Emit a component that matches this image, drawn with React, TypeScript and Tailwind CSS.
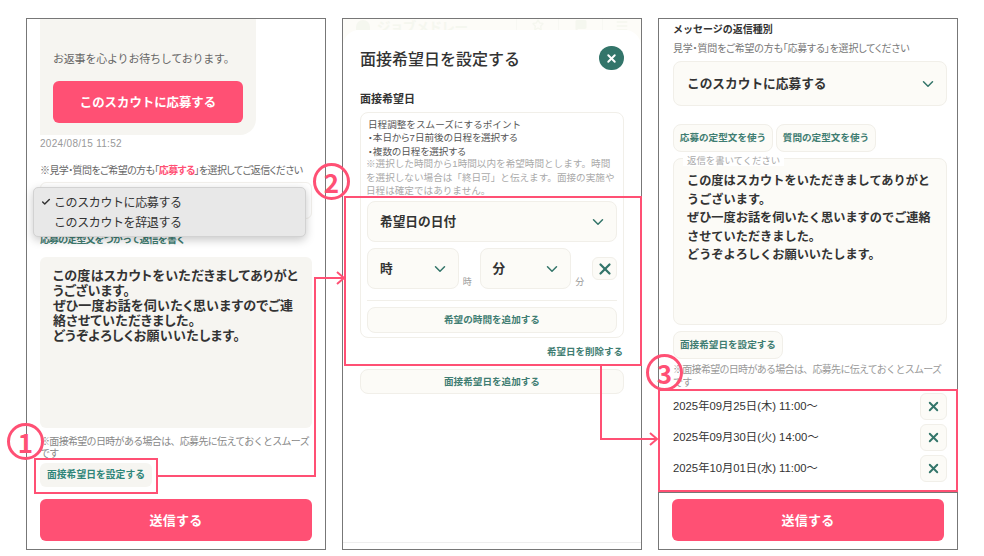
import { Check, ChevronDown, Menu, MessageSquare, Star, X } from 'lucide-react';

const fonts = "font-['Noto_Sans_CJK_JP','Noto_Sans',sans-serif]";
const latin = "font-['Liberation_Sans','Noto_Sans_CJK_JP',sans-serif]";
const palt = "[font-feature-settings:'palt']";

function SelectBox({ label, className }: { label: string; className: string }) {
  return (
    <div className={`flex items-center justify-between rounded-lg border border-[#f1efe9] bg-[#fcfbf7] pr-[9px] pl-3 text-[12.7px] leading-none font-bold text-[#333] ${className}`}>
      <span>{label}</span>
      <ChevronDown className="h-[18px] w-[18px] text-[#33756a]" strokeWidth={2} />
    </div>
  );
}

function GhostButton({ label, className }: { label: string; className: string }) {
  return (
    <div className={`flex items-center justify-center rounded-lg border border-[#f1efe9] bg-[#fcfbf7] text-[9.6px] leading-none font-bold text-[#3f7d72] ${className}`}>
      {label}
    </div>
  );
}

function RemoveButton({ className, size }: { className: string; size: number }) {
  return (
    <div className={`flex items-center justify-center rounded-md border border-[#f1efe9] bg-[#fcfbf7] text-[#33756a] ${className}`}>
      <X size={size} strokeWidth={3} />
    </div>
  );
}

function SendBar() {
  return (
    <div className="flex h-[42px] w-[272px] items-center justify-center rounded-md bg-[#ff5074] text-[13px] font-bold tracking-[0.2px] text-white">
      送信する
    </div>
  );
}

function ScreenOne() {
  return (
    <div className="relative flex h-[532px] w-[300px] flex-col border border-[#777] bg-white pl-[13px]">
      <div className="flex h-[116px] w-[216px] flex-col justify-end rounded-br-2xl bg-[#f6f5f1] px-[13px] pb-3">
        <p className="text-[11px] leading-4 tracking-[-0.2px] text-[#666]">お返事を心よりお待ちしております。</p>
        <div className="mt-[15px] flex h-[42px] w-[190px] items-center justify-center rounded-md bg-[#ff5074] text-[12.4px] font-bold text-white">
          このスカウトに応募する
        </div>
      </div>
      <p className={`mt-[3px] text-[10px] leading-3 tracking-[0.3px] text-[#999] ${latin}`}>2024/08/15 11:52</p>
      <p className={`mt-[14px] text-[10px] leading-3 tracking-[-0.6px] whitespace-nowrap text-[#666] ${palt}`}>
        ※見学・質問をご希望の方も「<span className="font-bold text-[#ff5074]">応募する</span>」を選択してご返信ください
      </p>
      <div className="mt-[6px] h-[37px] w-[272px] rounded-md border border-[#f2f0ec] bg-white" />
      <p className="mt-[14px] text-[10px] leading-3 font-bold tracking-[-0.9px] text-[#3f7d72]">応募の定型文をつかって返信を書く</p>
      <div className={`mt-3 h-[171px] w-[272px] rounded-md bg-[#f6f5f1] pt-[10px] pl-[13px] text-[13px] leading-[15px] font-bold tracking-[0.3px] whitespace-nowrap text-[#333] ${palt}`}>
        この度はスカウトをいただきましてありがと<br />
        うございます。<br />
        ぜひ一度お話を伺いたく思いますのでご連<br />
        絡させていただきました。<br />
        どうぞよろしくお願いいたします。
      </div>
      <p className="mt-[7px] w-[275px] text-[10px] leading-3 tracking-[-0.68px] text-[#888]">
        ※面接希望の日時がある場合は、応募先に伝えておくとスムーズ<br />です
      </p>
      <div className="mt-1 flex h-6 w-[112px] items-center justify-center rounded-md bg-[#f6f5f1] text-[9.8px] leading-none font-bold text-[#2f8579]">
        面接希望日を設定する
      </div>
      <div className="mt-3"><SendBar /></div>

      {/* native picker open over the select */}
      <div className="absolute top-[168px] left-[6px] flex h-[50px] w-[273px] flex-col justify-center rounded-[5px] border border-[#d2d2d2] bg-[#e8e8e8] text-xs tracking-[-0.4px] text-[#333] shadow-[0_3px_10px_rgba(0,0,0,0.22)]">
        <div className="flex h-[20.5px] items-center">
          <Check className="ml-[7px] h-2.5 w-2.5" strokeWidth={3.5} />
          <span className="ml-[3px]">このスカウトに応募する</span>
        </div>
        <div className="flex h-[20.5px] items-center pl-5">このスカウトを辞退する</div>
      </div>
    </div>
  );
}

function ScreenTwo() {
  return (
    <div className="flex h-[532px] w-[300px] flex-col border border-[#777] bg-[#fdfcf8]">
      {/* page header dimmed behind the sheet */}
      <div className="flex h-[11px] items-start overflow-hidden text-[#f1f4ea] opacity-60">
        <div className="mt-px ml-[13px] h-4 w-[14px] rounded-full bg-[#f1f4ea]" />
        <span className="ml-[7px] text-[13.5px] leading-[14px] font-bold tracking-[-0.6px]">ジョブメドレー</span>
        <div className="ml-auto flex h-[11px]">
          <div className="flex w-[42px] justify-center border-l border-[#f6f6f0]"><Star size={12} strokeWidth={2.5} /></div>
          <div className="flex w-[44px] justify-center border-l border-[#f6f6f0]"><MessageSquare size={12} fill="currentColor" /></div>
          <div className="flex w-[39px] justify-center border-l border-[#f6f6f0]"><Menu size={14} strokeWidth={2.5} /></div>
        </div>
      </div>
      <div className="flex flex-1 flex-col rounded-t-2xl bg-white px-[17px] pt-4">
        <div className="flex h-6 items-center justify-between">
          <h1 className="text-base leading-none font-medium text-[#333]">面接希望日を設定する</h1>
          <div className="flex h-6 w-[25px] items-center justify-center rounded-full bg-[#33756a] text-white">
            <X size={13} strokeWidth={3.5} />
          </div>
        </div>
        <p className="mt-[21px] text-[11px] leading-[14px] font-bold text-[#333]">面接希望日</p>
        <div className="mt-[7px] h-[226px] rounded-lg border border-[#f1efe9] px-[6px] pt-[5px]">
          <div className="h-[83px] pl-px text-[9.6px] leading-[12.8px] whitespace-nowrap text-[#555]">
            日程調整をスムーズにするポイント<br />
            <span className={palt}>・本日から<span className={latin}>7</span>日前後の日程を選択する</span><br />
            <span className={palt}>・複数の日程を選択する</span>
            <p className="-ml-[2px] text-[#aaa]">
              ※選択した時間から<span className={latin}>1</span>時間以内を希望時間とします。時間<br />
              を選択しない場合は「終日可」と伝えます。面接の実施や<br />
              日程は確定ではありません。
            </p>
          </div>
          <SelectBox label="希望日の日付" className="h-[41px]" />
          <div className="mt-[6px] flex h-[41px]">
            <SelectBox label="時" className="h-[41px] w-[92px]" />
            <span className="mt-7 ml-1 w-[17px] text-[9px] leading-3 text-[#999]">時</span>
            <SelectBox label="分" className="h-[41px] w-[92px]" />
            <span className="mt-7 ml-1 w-[17px] text-[9px] leading-3 text-[#999]">分</span>
            <RemoveButton size={18} className="mt-[9px] h-[23px] w-[25px]" />
          </div>
          <div className="mt-[11px] border-t border-[#f1efe9]" />
          <GhostButton label="希望の時間を追加する" className="mt-[6px] h-[26px]" />
        </div>
        <p className="mt-[6px] pr-px text-right text-[9.5px] leading-[14px] font-bold text-[#3f7d72]">希望日を削除する</p>
        <GhostButton label="面接希望日を追加する" className="mt-[11px] h-[25px]" />
        <div className="-mx-[17px] mt-auto mb-[6px] border-t border-[#eee]" />
      </div>
    </div>
  );
}

function ScreenThree() {
  const dates = ['2025年09月25日(木) 11:00～', '2025年09月30日(火) 14:00～', '2025年10月01日(水) 11:00～'];
  return (
    <div className="flex h-[532px] w-[300px] flex-col border border-[#777] bg-white">
      <div className="h-[473px] overflow-hidden pt-[3px] pr-[10px] pl-[14px]">
        <p className="text-[10px] leading-[14px] font-bold text-[#333]">メッセージの返信種別</p>
        <p className={`mt-[5px] text-[10px] leading-[14px] tracking-[-0.2px] whitespace-nowrap text-[#777] ${palt}`}>見学・質問をご希望の方も「応募する」を選択してください</p>
        <SelectBox label="このスカウトに応募する" className="mt-[6px] h-[45px] pl-[13px]" />
        <div className="mt-[18px] flex gap-[3px]">
          <GhostButton label="応募の定型文を使う" className="h-7 w-[100px]" />
          <GhostButton label="質問の定型文を使う" className="h-7 w-[100px]" />
        </div>
        <div className="relative mt-[6px] h-[167px] rounded-lg border border-[#f1efe9] bg-[#fcfbf7] pt-3 pl-[13px] text-[12.2px] leading-[18.5px] font-bold whitespace-nowrap text-[#333]">
          <span className="absolute -top-[5px] left-[9px] bg-white px-1 text-[9.4px] leading-3 font-normal text-[#aaa]">返信を書いてください</span>
          この度はスカウトをいただきましてありがと<br />
          うございます。<br />
          ぜひ一度お話を伺いたく思いますのでご連絡<br />
          させていただきました。<br />
          どうぞよろしくお願いいたします。
        </div>
        <GhostButton label="面接希望日を設定する" className="mt-[6px] h-7 w-[110px]" />
        <p className="mt-[3px] w-[275px] text-[10px] leading-[13px] tracking-[-0.7px] text-[#999]">
          ※面接希望の日時がある場合は、応募先に伝えておくとスムーズ<br />です
        </p>
        <div className="mt-[5px] flex flex-col gap-1">
          {dates.map((d) => (
            <div key={d} className="flex h-[27px] items-center justify-between">
              <span className={`text-[11.3px] text-[#333] ${latin}`}>{d}</span>
              <RemoveButton size={15} className="h-[27px] w-[27px]" />
            </div>
          ))}
        </div>
      </div>
      <div className="border-t border-[#777] pt-[6px] pl-[13px]"><SendBar /></div>
    </div>
  );
}

function Badge({ n, className }: { n: string; className: string }) {
  return (
    <div className={`absolute flex h-[37px] w-[37px] items-center justify-center rounded-full border-[3px] border-[#ff5074] text-[26px] leading-none font-bold text-[#ff5074] ${className}`}>
      {n}
    </div>
  );
}

export default function App() {
  return (
    <div className={`relative h-[556px] w-[984px] overflow-hidden bg-white ${fonts}`}>
      <div className="flex gap-4 pt-[18px] pl-[26px]">
        <ScreenOne />
        <ScreenTwo />
        <ScreenThree />
      </div>

      {/* annotations */}
      <div className="absolute top-[458px] left-[34px] h-[36px] w-[124px] border-2 border-[#ff5074]" />
      <div className="absolute top-[196px] left-[344px] h-[170px] w-[298px] border-2 border-[#ff5074]" />
      <div className="absolute top-[389px] left-[658px] h-[103px] w-[300px] border-2 border-[#ff5074]" />
      <svg className="absolute top-0 left-0" width="984" height="556" fill="none" stroke="#ff5074" strokeWidth="2">
        <path d="M158 476H315V278H344" />
        <path d="M337 272l7 6-7 6" />
        <path d="M601 366V439H657" />
        <path d="M650 433l7 6-7 6" />
      </svg>
      <Badge n="1" className="top-[423px] left-[7px]" />
      <Badge n="2" className="top-[163px] left-[313px]" />
      <Badge n="3" className="top-[354px] left-[646px]" />
    </div>
  );
}
